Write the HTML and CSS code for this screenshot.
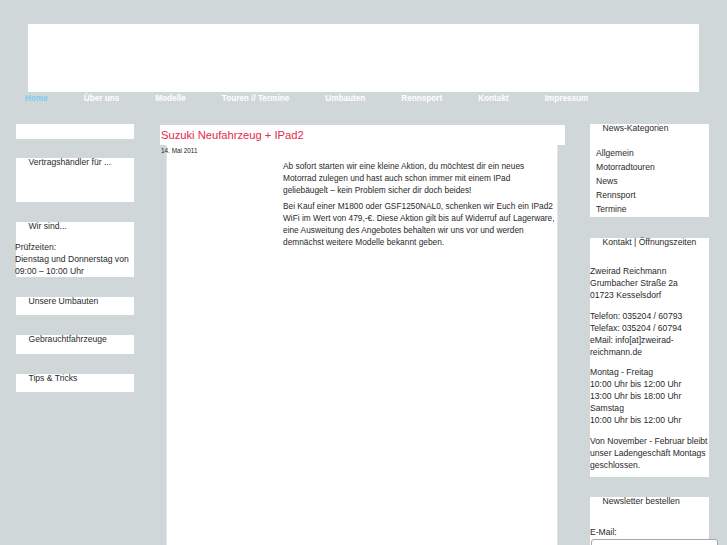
FILE: index.html
```html
<!DOCTYPE html>
<html lang="de">
<head>
<meta charset="utf-8">
<title>Zweirad Reichmann</title>
<link rel="stylesheet" href="styles.css">
</head>
<body>
<div class="page">
  <header class="banner"></header>
  <nav class="nav">
    <a class="nav__item nav__item--active" href="#">Home</a>
    <a class="nav__item" href="#">Über uns</a>
    <a class="nav__item" href="#">Modelle</a>
    <a class="nav__item" href="#">Touren // Termine</a>
    <a class="nav__item" href="#">Umbauten</a>
    <a class="nav__item" href="#">Rennsport</a>
    <a class="nav__item" href="#">Kontakt</a>
    <a class="nav__item" href="#">Impressum</a>
  </nav>
  <div class="columns">
    <aside class="sidebar sidebar--left">
      <section class="box box--empty"></section>
      <section class="box box--dealer"><h3 class="box__title">Vertragshändler für ...</h3></section>
      <section class="box box--about">
        <h3 class="box__title">Wir sind...</h3>
        <p class="box__text box__text--about">Prüfzeiten:<br>Dienstag und Donnerstag von<br>09:00 – 10:00 Uhr</p>
      </section>
      <section class="box box--link"><h3 class="box__title">Unsere Umbauten</h3></section>
      <section class="box box--link"><h3 class="box__title">Gebrauchtfahrzeuge</h3></section>
      <section class="box box--link"><h3 class="box__title">Tips &amp; Tricks</h3></section>
    </aside>

    <main class="main">
      <div class="post__head"><h1 class="post__title">Suzuki Neufahrzeug + IPad2</h1></div>
      <div class="post__body">
        <div class="post__date">14. Mai 2011</div>
        <div class="post__text">
          <p>Ab sofort starten wir eine kleine Aktion, du möchtest dir ein neues Motorrad zulegen und hast auch schon immer mit einem IPad geliebäugelt – kein Problem sicher dir doch beides!</p>
          <p>Bei Kauf einer M1800 oder GSF1250NAL0, schenken wir Euch ein IPad2 WiFi im Wert von 479,-€. Diese Aktion gilt bis auf Widerruf auf Lagerware, eine Ausweitung des Angebotes behalten wir uns vor und werden demnächst weitere Modelle bekannt geben.</p>
        </div>
      </div>
    </main>

    <aside class="sidebar sidebar--right">
      <section class="box box--news">
        <h3 class="box__title">News-Kategorien</h3>
        <ul class="catlist">
          <li>Allgemein</li>
          <li>Motorradtouren</li>
          <li>News</li>
          <li>Rennsport</li>
          <li>Termine</li>
        </ul>
      </section>
      <section class="box box--contact">
        <h3 class="box__title">Kontakt | Öffnungszeiten</h3>
        <div class="contact">
          <p>Zweirad Reichmann<br>Grumbacher Straße 2a<br>01723 Kesselsdorf</p>
          <p>Telefon: 035204 / 60793<br>Telefax: 035204 / 60794<br>eMail: info[at]zweirad-reichmann.de</p>
          <p>Montag - Freitag<br>10:00 Uhr bis 12:00 Uhr<br>13:00 Uhr bis 18:00 Uhr<br>Samstag<br>10:00 Uhr bis 12:00 Uhr</p>
          <p>Von November - Februar bleibt unser Ladengeschäft Montags geschlossen.</p>
        </div>
      </section>
      <section class="box box--newsletter">
        <h3 class="box__title">Newsletter bestellen</h3>
        <label class="newsletter__label" for="nl-mail">E-Mail:</label>
        <input class="newsletter__input" id="nl-mail" type="text">
      </section>
    </aside>
  </div>
</div>
</body>
</html>
```

FILE: styles.css
```css
html, body {
  margin: 0;
  padding: 0;
}

body {
  background: #cfd7d9;
  font-family: "Liberation Sans", Arial, sans-serif;
  color: #2a2a2a;
  font-size: 8.6px;
  overflow: hidden;
}

.page {
  padding-top: 24px;
}

.banner {
  margin: 0 28px;
  height: 68px;
  background: #ffffff;
}

.nav {
  display: flex;
  gap: 36px;
  padding-left: 25px;
  margin-top: 2px;
  height: 10px;
}

.nav__item {
  font-size: 8.2px;
  font-weight: bold;
  line-height: 10px;
  color: #ffffff;
  text-decoration: none;
}

.nav__item--active {
  color: #7ccbef;
}

.columns {
  display: flex;
  align-items: flex-start;
  padding-left: 16px;
  margin-top: 20px;
}

.sidebar {
  display: flex;
  flex-direction: column;
}

.sidebar--left {
  width: 118px;
  gap: 20px;
}

.sidebar--right {
  width: 119px;
  gap: 20.5px;
  margin-left: 25px;
}

.box {
  background: #ffffff;
  box-sizing: border-box;
}

.box__title {
  margin: 0;
  padding-left: 12.5px;
  font-size: 8.6px;
  font-weight: normal;
  line-height: 8px;
  color: #2a2a2a;
}

.box--empty {
  height: 15px;
  margin-bottom: -1px;
}

.box--dealer {
  height: 44px;
}

.box--about {
  height: 54.5px;
}

.box--link {
  height: 18.5px;
}

.box__text {
  margin: 0;
  line-height: 12px;
}

.box__text--about {
  margin-top: 11.3px;
  margin-left: -1px;
}

/* main column */
.main {
  width: 405px;
  margin-left: 26px;
  margin-top: 1px;
}

.post__head {
  background: #ffffff;
  height: 20px;
}

.post__title {
  margin: 0;
  padding-left: 1px;
  font-size: 11.2px;
  font-weight: normal;
  line-height: 20px;
  color: #e6294b;
}

.post__body {
  margin: 0 7px 0 6px;
  min-height: 420px;
  background: #ffffff;
  border-left: 1px solid #e2e5e5;
  border-right: 1px solid #e2e5e5;
}

.post__date {
  margin-left: -6px;
  padding-top: 2px;
  font-size: 6.4px;
  line-height: 8px;
  color: #222222;
}

.post__text {
  margin-top: 5px;
  padding-left: 116px;
  width: 273px;
  font-size: 8.33px;
}

.post__text p {
  margin: 0 0 4px;
  line-height: 12px;
}

/* right column */
.box--news {
  padding-bottom: 1px;
}

.catlist {
  list-style: none;
  margin: 14px 0 0;
  padding: 0 0 0 6px;
}

.catlist li {
  line-height: 14px;
}

.box--contact {
  padding-bottom: 6px;
}

.contact {
  margin-top: 19.5px;
}

.contact p {
  margin: 0 0 8.5px;
  line-height: 12px;
}

.contact p:last-child {
  margin-bottom: 0;
}

.box--newsletter {
  min-height: 60px;
}

.newsletter__label {
  display: block;
  margin-top: 20.5px;
  line-height: 12px;
}

.newsletter__input {
  display: block;
  box-sizing: border-box;
  margin: 1.7px 0 0 1px;
  width: 127px;
  height: 18px;
  border: 1px solid #a8a8a8;
  border-radius: 3px;
  background: #ffffff;
}
```
